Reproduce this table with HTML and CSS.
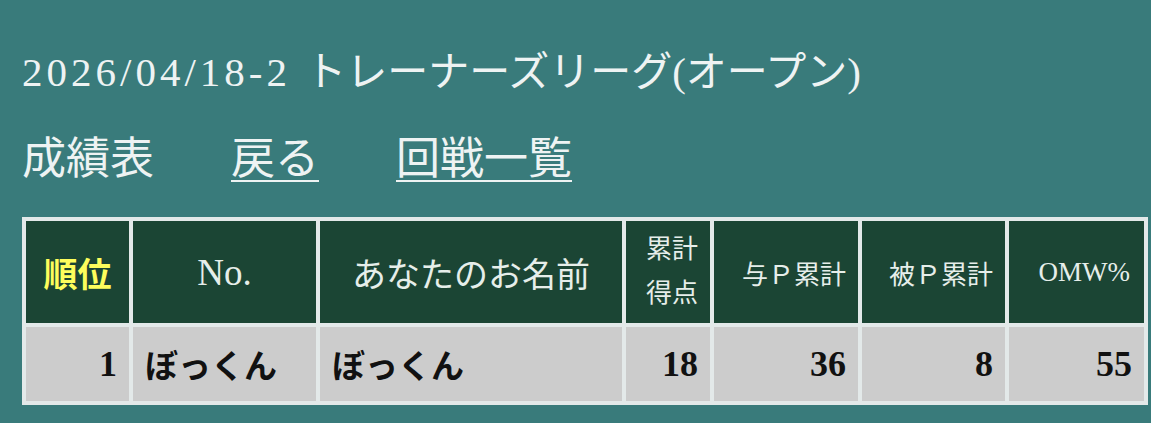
FILE: index.html
```html
<!DOCTYPE html>
<html lang="ja">
<head>
<meta charset="utf-8">
<title>成績表</title>
<link rel="stylesheet" href="styles.css">
</head>
<body>
<div class="page">
  <h1 class="title"><span class="date">2026/04/18-2</span> トレーナーズリーグ(オープン)</h1>
  <nav class="nav">
    <span class="nav-item">成績表</span>
    <a class="nav-item nav-link" href="#">戻る</a>
    <a class="nav-item nav-link" href="#">回戦一覧</a>
  </nav>
  <table class="results">
    <colgroup>
      <col class="c-rank">
      <col class="c-no">
      <col class="c-name">
      <col class="c-score">
      <col class="c-give">
      <col class="c-take">
      <col class="c-omw">
    </colgroup>
    <thead>
      <tr>
        <th class="h-big h-rank">順位</th>
        <th class="h-big h-center h-no">No.</th>
        <th class="h-big h-center">あなたのお名前</th>
        <th class="h-small h-two">累計<br>得点</th>
        <th class="h-small">与Ｐ累計</th>
        <th class="h-small">被Ｐ累計</th>
        <th class="h-small h-latin">OMW%</th>
      </tr>
    </thead>
    <tbody>
      <tr>
        <td class="num">1</td>
        <td class="txt">ぼっくん</td>
        <td class="txt">ぼっくん</td>
        <td class="num">18</td>
        <td class="num">36</td>
        <td class="num">8</td>
        <td class="num">55</td>
      </tr>
    </tbody>
  </table>
</div>
</body>
</html>
```
FILE: styles.css
```css
html, body {
  margin: 0;
  padding: 0;
}
body {
  background: #397b7b;
  color: #eef3f3;
  font-family: "Liberation Serif", "Noto Sans CJK JP", serif;
}
.page {
  padding: 45px 22px 0 22px;
}
.title {
  margin: 0;
  font-size: 41px;
  font-weight: normal;
  line-height: 54px;
  white-space: nowrap;
}
.date {
  letter-spacing: 4px;
  margin-right: 4px;
}
.nav {
  margin-top: 35px;
  display: flex;
  gap: 77px;
  font-size: 44px;
  line-height: 52px;
}
.nav-item {
  color: #eef3f3;
}
.nav-link {
  text-decoration: underline;
  text-decoration-thickness: 2px;
  text-underline-offset: 6px;
}
.results {
  margin-top: 31px;
  table-layout: fixed;
  width: 1126px;
  border-collapse: separate;
  border-spacing: 4px;
  background: #e3e9e9;
}
.c-rank { width: 103px; }
.c-no { width: 183px; }
.c-name { width: 302px; }
.c-score { width: 84px; }
.c-give { width: 144px; }
.c-take { width: 143px; }
.c-omw { width: 135px; }
.results th {
  background: #1b4534;
  color: #e6eeea;
  font-weight: normal;
  height: 102px;
  padding: 0 12px 0 0;
  text-align: right;
  vertical-align: middle;
  white-space: nowrap;
}
.h-big {
  font-size: 34px;
}
.h-no {
  font-size: 37px;
}
.h-center {
  text-align: center !important;
  padding: 0 !important;
}
.h-rank {
  color: #fdfd5c !important;
  font-weight: bold !important;
  text-align: center !important;
  padding: 0 !important;
}
.h-small {
  font-size: 26px;
}
.h-two {
  line-height: 44px;
}
.h-latin {
  font-size: 27px;
  padding-right: 14px !important;
}
.results td {
  background: #cccccc;
  color: #111111;
  font-weight: bold;
  font-size: 36px;
  height: 74px;
  padding: 0 12px;
  vertical-align: middle;
}
.results td.num {
  text-align: right;
}
.results td.txt {
  text-align: left;
  font-size: 33px;
}
```
